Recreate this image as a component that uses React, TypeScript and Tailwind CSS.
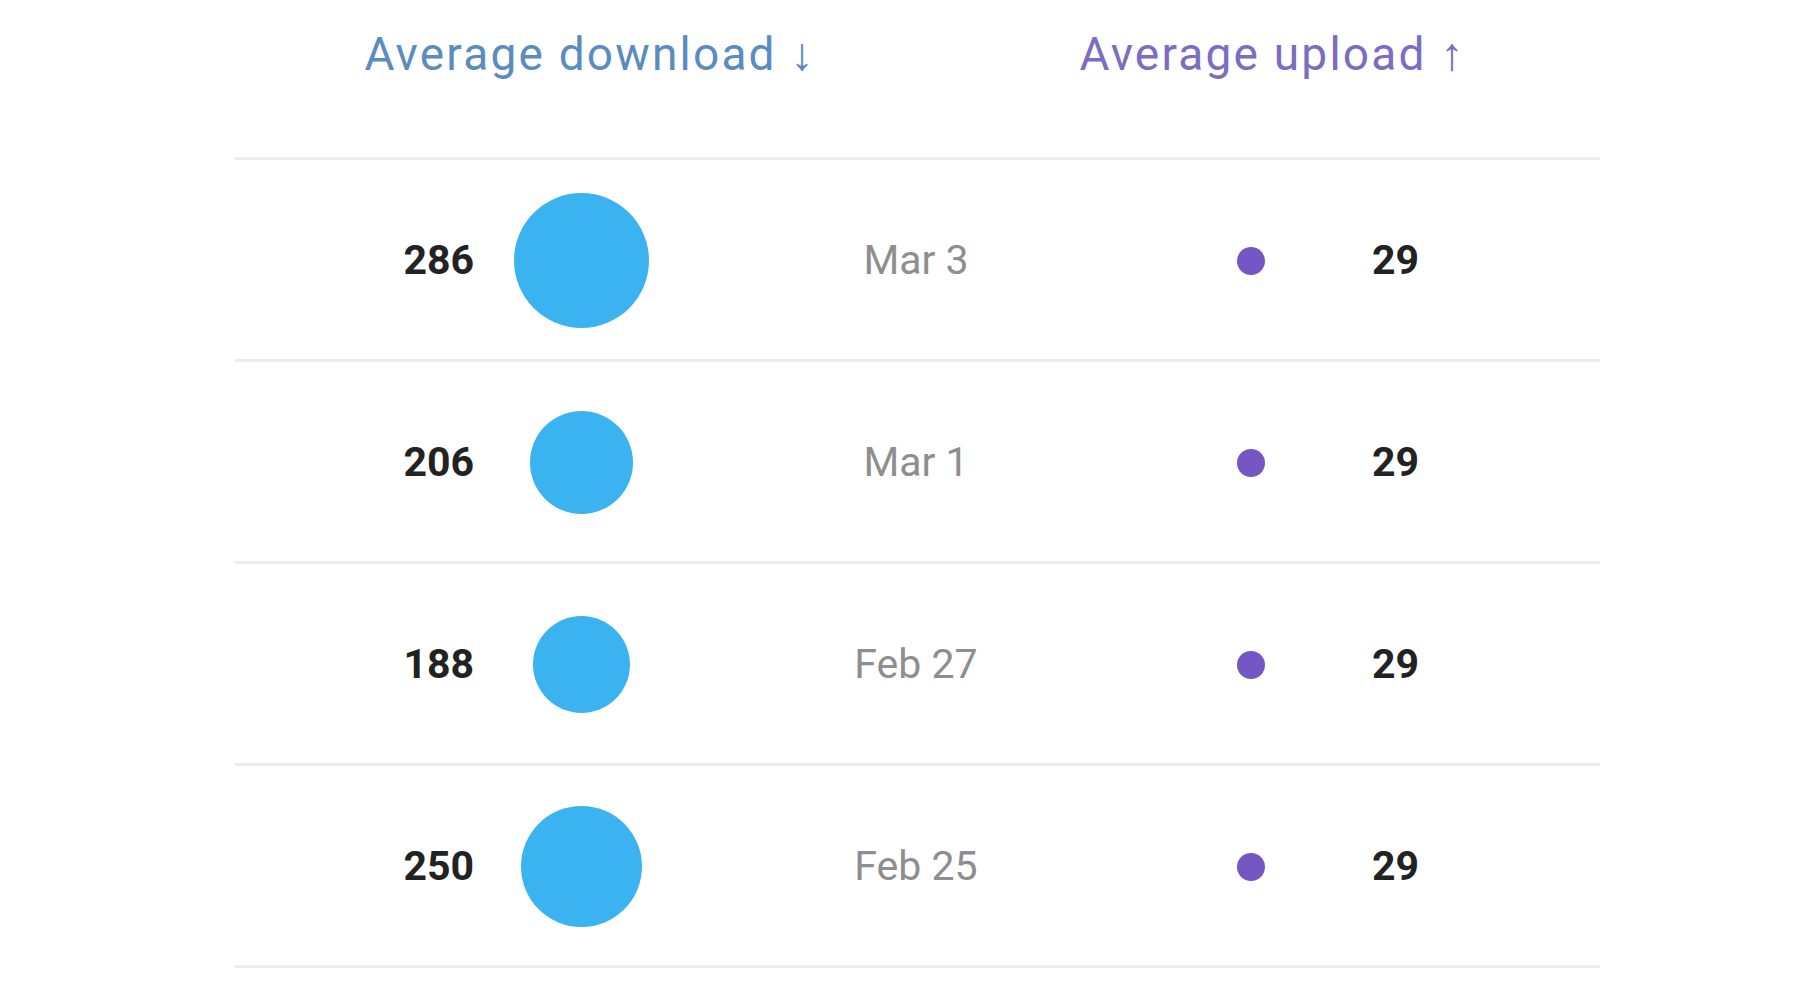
const rows = [
  { down: 286, size: 135, date: "Mar 3", up: 29 },
  { down: 206, size: 103, date: "Mar 1", up: 29 },
  { down: 188, size: 97, date: "Feb 27", up: 29 },
  { down: 250, size: 121, date: "Feb 25", up: 29 },
];

export default function App() {
  return (
    <main className="w-[1800px] h-[1000px] bg-white overflow-hidden font-['Roboto',sans-serif]">
      <div className="ml-[235px] w-[1365px]">
        <div className="grid grid-cols-[710px_655px] h-[157px] items-start pt-[20px]">
          <span className="text-center text-[46px] text-[#5a8cc0] tracking-[2.2px]">Average download ↓</span>
          <span className="text-center text-[46px] text-[#7b6dc2] tracking-[2.2px]">Average upload ↑</span>
        </div>
        <div className="h-[3px] bg-[#ececec]" />
        {rows.map(r => (
          <div key={r.date}>
            <div className="grid grid-cols-[239px_214px_456px_214px_242px] h-[199px] items-center pt-[2px]">
              <span className="text-right text-[41px] font-bold text-[#222]">{r.down}</span>
              <div className="flex justify-center">
                <div className="rounded-full bg-[#3bb3f0]" style={{ width: r.size, height: r.size }} />
              </div>
              <span className="text-center text-[41px] text-[#8e8e8e]">{r.date}</span>
              <div className="flex justify-center">
                <div className="w-[28px] h-[28px] rounded-full bg-[#7457c4]" />
              </div>
              <span className="pl-[14px] text-[41px] font-bold text-[#222]">{r.up}</span>
            </div>
            <div className="h-[3px] bg-[#ececec]" />
          </div>
        ))}
      </div>
    </main>
  );
}
